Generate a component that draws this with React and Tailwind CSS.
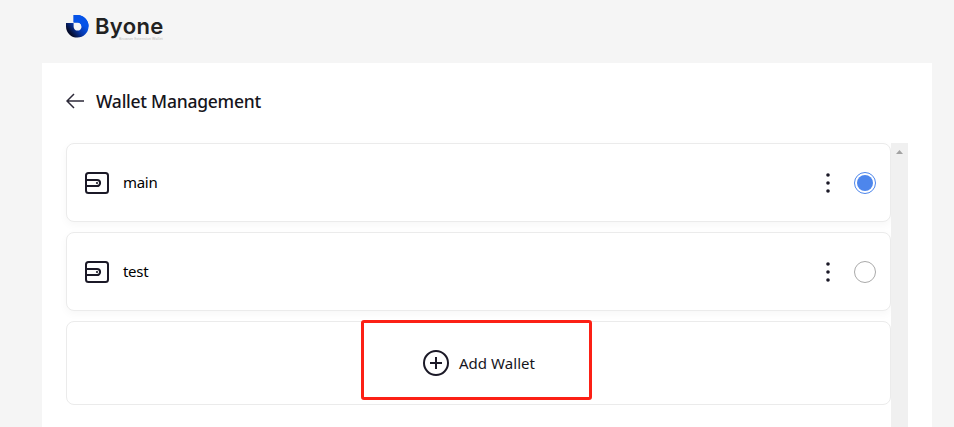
import React from 'react';

function Logo() {
  return (
    <div className="flex items-start">
      <svg width="23" height="23" viewBox="0 0 23 23" className="mt-[4px] shrink-0">
        <defs>
          <linearGradient id="ring" x1="0.9" y1="0.2" x2="0.1" y2="0.85">
            <stop offset="0.2" stopColor="#0553e8" />
            <stop offset="0.55" stopColor="#0736a8" />
            <stop offset="0.9" stopColor="#050c2c" />
          </linearGradient>
        </defs>
        <path d="M0 8H7.6V11.5A4 4 0 1 0 11.5 7.6H7.6V0H11.5A11.3 11.3 0 1 1 0 11.5Z" fill="url(#ring)" />
        <path d="M7.6 0H11.5A11.3 11.3 0 0 1 22.6 11.5H15.5A4 4 0 0 0 11.5 7.6H7.6Z" fill="#0553e8" />
      </svg>
      <div className="ml-[6px] flex w-[72px] flex-col pt-[4px]">
        <span className="whitespace-nowrap font-['Inter',sans-serif] text-[22px] leading-[22px] font-semibold tracking-[0.35px] text-[#222]">
          Byone
        </span>
        <span className="ml-[24px] whitespace-nowrap font-['Noto_Sans',sans-serif] text-[3.7px] leading-[4px] text-[#bcbcbc]">
          Browser Extension Wallet
        </span>
      </div>
    </div>
  );
}

function WalletIcon() {
  return (
    <svg width="24" height="22" viewBox="0 0 24 22" fill="none" stroke="#1b1927" strokeWidth="2" className="shrink-0">
      <rect x="1" y="1" width="22" height="20" rx="2.5" />
      <path d="M1 7.9H12A3.1 3.1 0 0 1 12 14.1H1" />
      <circle cx="12" cy="11" r="1.1" fill="#1b1927" stroke="none" />
    </svg>
  );
}

function WalletRow({ name, selected }) {
  return (
    <div className="flex h-[79px] shrink-0 items-center rounded-lg border border-[#ebebeb] bg-white pr-[14px] pl-[18px] shadow-[0_3px_8px_rgba(0,0,0,0.035)]">
      <WalletIcon />
      <span className="mb-[2px] ml-[14px] flex-1 text-[15px] leading-5 tracking-[-0.3px] text-black">{name}</span>
      <svg width="6" height="20" viewBox="0 0 6 20" fill="#1b1927" className="mr-[23px]">
        <circle cx="3" cy="2" r="1.8" />
        <circle cx="3" cy="10" r="1.8" />
        <circle cx="3" cy="18" r="1.8" />
      </svg>
      <span className={`flex h-[22px] w-[22px] items-center justify-center rounded-full border ${selected ? 'border-[#4d86ec]' : 'border-[#aaa]'}`}>
        {selected && <span className="h-4 w-4 rounded-full bg-[#4d86ec]" />}
      </span>
    </div>
  );
}

export default function App() {
  return (
    <div className="flex h-[427px] w-[954px] flex-col overflow-hidden bg-[#f5f5f5] font-['Noto_Sans',sans-serif] text-[#16151c]">
      <header className="h-[63px] shrink-0 pt-[11px] pl-[66px]">
        <Logo />
      </header>
      <main className="mr-[22px] ml-[42px] flex min-h-0 flex-1 flex-col bg-white px-6">
        <div className="flex h-20 shrink-0 items-center pb-[4px]">
          <svg width="18" height="16" viewBox="0 0 18 16" fill="none" stroke="#2c2938" strokeWidth="1.5">
            <path d="M18 8H1M8 1L1 8L8 15" />
          </svg>
          <h1 className="ml-[12px] text-[17.5px] leading-6 font-medium tracking-[-0.25px]">Wallet Management</h1>
        </div>
        <div className="flex min-h-0 flex-1">
          <div className="flex w-[825px] flex-col gap-[10px]">
            <WalletRow name="main" selected />
            <WalletRow name="test" />
            <div className="relative flex h-[84px] shrink-0 items-center justify-center rounded-lg border border-[#ebebeb] bg-white pl-px">
              <svg width="26" height="26" viewBox="0 0 26 26" fill="none" stroke="#1b1927" strokeWidth="2">
                <circle cx="13" cy="13" r="12" />
                <path d="M13 7V19M7 13H19" />
              </svg>
              <span className="ml-[10px] text-[15px] leading-5 tracking-[0.05px]">Add Wallet</span>
              <div className="absolute -top-[2px] left-[294px] h-20 w-[231px] rounded-[3px] border-3 border-[#fc2015]" />
            </div>
          </div>
          <div className="flex w-[17px] justify-center bg-[#f0f0f0]">
            <svg width="7" height="4" viewBox="0 0 7 4" className="mt-[7px]">
              <path d="M3.5 0L7 4H0Z" fill="#a3a3a3" />
            </svg>
          </div>
        </div>
      </main>
    </div>
  );
}
